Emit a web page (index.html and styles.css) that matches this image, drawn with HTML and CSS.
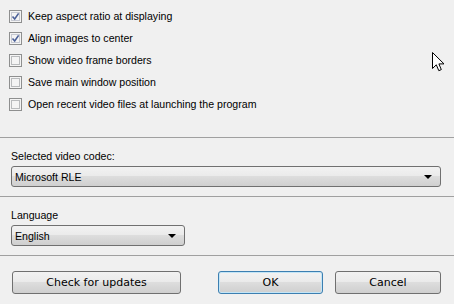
FILE: index.html
```html
<!DOCTYPE html>
<html>
<head>
<meta charset="utf-8">
<link rel="stylesheet" href="styles.css">
</head>
<body>
<div class="dialog">
  <section class="options">
    <label class="check"><span class="box checked"><svg viewBox="0 0 9 9" width="9" height="9"><path d="M1.5 4.5 L3.7 7 L7.6 1.4" fill="none" stroke="#4a5f97" stroke-width="1.6"/></svg></span>Keep aspect ratio at displaying</label>
    <label class="check"><span class="box checked"><svg viewBox="0 0 9 9" width="9" height="9"><path d="M1.5 4.5 L3.7 7 L7.6 1.4" fill="none" stroke="#4a5f97" stroke-width="1.6"/></svg></span>Align images to center</label>
    <label class="check"><span class="box"></span>Show video frame borders</label>
    <label class="check"><span class="box"></span>Save main window position</label>
    <label class="check"><span class="box"></span>Open recent video files at launching the program</label>
  </section>
  <section class="group codec">
    <div class="caption">Selected video codec:</div>
    <div class="combo wide"><span>Microsoft RLE</span><i class="arrow"></i></div>
  </section>
  <section class="group lang">
    <div class="caption">Language</div>
    <div class="combo narrow"><span>English</span><i class="arrow"></i></div>
  </section>
  <section class="buttons">
    <div class="btn updates">Check for updates</div>
    <div class="btn ok">OK</div>
    <div class="btn cancel">Cancel</div>
  </section>
</div>
<svg class="cursor" width="14" height="21" viewBox="0 0 14 21"><path d="M0.5 0.5 L0.5 16.5 L4.3 12.8 L6.8 18.7 L9.3 17.6 L6.9 11.9 L12 11.9 Z" fill="#fff" stroke="#000" stroke-width="1" stroke-linejoin="miter"/></svg>
</body>
</html>
```
FILE: styles.css
```css
html, body {
  margin: 0;
  padding: 0;
  background: #f0f0f0;
}
body {
  width: 454px;
  height: 304px;
  overflow: hidden;
  position: relative;
  font-family: "Liberation Sans", Arial, sans-serif;
  font-size: 10.6px;
  color: #000;
}
.dialog {
  display: flex;
  flex-direction: column;
}
.options {
  height: 137px;
  box-sizing: border-box;
  padding: 10px 0 0 9px;
  display: flex;
  flex-direction: column;
  gap: 9px;
}
.check {
  display: flex;
  align-items: center;
  height: 13px;
  gap: 6px;
  line-height: 13px;
}
.box {
  width: 13px;
  height: 13px;
  box-sizing: border-box;
  border: 1px solid #8e8f8f;
  background: #f4f4f4;
  box-shadow: inset 0 0 0 1px #f4f4f4, inset 0 0 0 2px #b9bbbd;
  display: flex;
  align-items: center;
  justify-content: center;
  flex: none;
}
.box.checked {
  box-shadow: inset 0 0 0 1px #f4f4f4, inset 0 0 0 2px #c6c9d2;
}
.group {
  border-top: 1px solid #a0a0a0;
  height: 59px;
  box-sizing: border-box;
  padding: 12px 0 0 11px;
  display: flex;
  flex-direction: column;
  gap: 4px;
}
.caption {
  height: 12px;
  line-height: 12px;
}
.combo {
  height: 21px;
  box-sizing: border-box;
  border: 1px solid #707070;
  border-radius: 3px;
  background: linear-gradient(#f2f2f2 0%, #ebebeb 45%, #dddddd 50%, #cfcfcf 100%);
  display: flex;
  align-items: center;
  justify-content: space-between;
  padding: 0 8px 0 3px;
}
.combo.wide { width: 430px; }
.combo.narrow { width: 174px; }
.arrow {
  width: 0;
  height: 0;
  border-left: 4px solid transparent;
  border-right: 4px solid transparent;
  border-top: 4px solid #000;
  margin-top: 1px;
}
.buttons {
  border-top: 1px solid #a0a0a0;
  height: 48px;
  box-sizing: border-box;
  padding: 15px 0 0 12px;
  display: flex;
  align-items: flex-start;
}
.btn {
  height: 23px;
  box-sizing: border-box;
  border: 1px solid #707070;
  border-radius: 3px;
  background: linear-gradient(#f2f2f2 0%, #ebebeb 45%, #dddddd 50%, #cfcfcf 100%);
  display: flex;
  align-items: center;
  justify-content: center;
  font-family: "DejaVu Sans", sans-serif;
  font-size: 11px;
}
.updates { width: 169px; }
.ok {
  width: 105px;
  margin-left: 37px;
  border-color: #3c7fb1;
  box-shadow: inset 0 0 0 1px #c4e5f6;
}
.cancel {
  width: 106px;
  margin-left: 12px;
}
.cursor {
  position: absolute;
  left: 432px;
  top: 52px;
}
```
